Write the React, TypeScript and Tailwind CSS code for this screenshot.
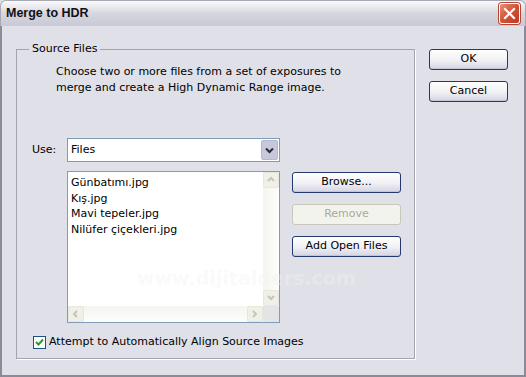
import React from 'react';

const font = { fontFamily: '"DejaVu Sans", Verdana, sans-serif' };
const titleFont = { fontFamily: '"Liberation Sans", Arial, sans-serif' };

const Button = ({ label, disabled = false }: { label: string; disabled?: boolean }) => (
  <div
    className={
      disabled
        ? 'h-[21px] flex items-center justify-center rounded-[3px] border border-[#c9c7ba] bg-[#f3f3ee] text-[#aca899] text-[11px]'
        : 'h-[21px] flex items-center justify-center rounded-[3px] border border-[#243a6e] bg-gradient-to-b from-white via-[#f2f2f6] to-[#d4d5e2] text-black text-[11px] shadow-[inset_0_-1px_0_#c3c4d6]'
    }
  >
    {label}
  </div>
);

const Chevron = ({ dir, color }: { dir: 'up' | 'down' | 'left' | 'right'; color: string }) => {
  const pts = {
    up: '2,6 5,3 8,6',
    down: '2,3 5,6 8,3',
    left: '6,2 3,5 6,8',
    right: '3,2 6,5 3,8',
  }[dir];
  return (
    <svg width="10" height="10" viewBox="0 0 10 10">
      <polyline points={pts} fill="none" stroke={color} strokeWidth="2" />
    </svg>
  );
};

const ScrollBtn = ({ dir }: { dir: 'up' | 'down' | 'left' | 'right' }) => (
  <div className="w-[16px] h-[16px] flex items-center justify-center rounded-[2px] border border-[#e8e7dc] bg-[#f1f0e8]">
    <Chevron dir={dir} color="#c6c5b8" />
  </div>
);

const files = ['Günbatımı.jpg', 'Kış.jpg', 'Mavi tepeler.jpg', 'Nilüfer çiçekleri.jpg'];

export default function App() {
  return (
    <div className="w-[526px] h-[377px] flex flex-col bg-[#e0e0e8] text-black relative" style={font}>
      {/* title bar */}
      <div className="h-[26px] flex items-center justify-between pl-[5px] pr-[5px] rounded-t-[6px] border border-b-0 border-[#a9a9b6] bg-gradient-to-b from-[#fbfbfd] via-[#d6d6e0] to-[#c9c9d5]">
        <span className="text-[12.5px] font-bold text-[#111]" style={titleFont}>Merge to HDR</span>
        <div className="w-[21px] h-[21px] rounded-[3px] border border-white bg-gradient-to-br from-[#e98d76] via-[#d2513a] to-[#b63a26] flex items-center justify-center shadow-[0_0_0_1px_#b5472f]">
          <svg width="13" height="13" viewBox="0 0 13 13">
            <path d="M2 2 L11 11 M11 2 L2 11" stroke="white" strokeWidth="2.2" strokeLinecap="square" />
          </svg>
        </div>
      </div>

      {/* body */}
      <div className="flex-1 flex border-x-2 border-b-2 border-[#8b8b98] pl-[14px] pt-[16px]">
        <fieldset className="w-[399px] h-[317px] border border-[#a4a4ae] shadow-[1px_1px_0_white] px-0">
          <legend className="ml-[12px] px-[3px] text-[11px] leading-[14px]">Source Files</legend>

          <div className="ml-[39px] mt-[8px] text-[11px] leading-[16px]">
            <div>Choose two or more files from a set of exposures to</div>
            <div>merge and create a High Dynamic Range image.</div>
          </div>

          <div className="flex items-center mt-[42px]">
            <span className="ml-[15px] w-[35px] text-[11px]">Use:</span>
            <div className="w-[213px] h-[24px] border border-[#7f9db9] bg-white flex items-center">
              <span className="flex-1 pl-[3px] text-[11px]">Files</span>
              <div className="w-[17px] h-[20px] mr-[1px] rounded-[2px] bg-[#c7c8da] border border-[#b6b8cc] flex items-center justify-center">
                <svg width="9" height="7" viewBox="0 0 9 7">
                  <polyline points="1,1.5 4.5,5 8,1.5" fill="none" stroke="#2b2b33" strokeWidth="2" />
                </svg>
              </div>
            </div>
          </div>

          <div className="flex mt-[9px]">
            <div className="ml-[50px] w-[213px] h-[152px] border border-[#7f9db9] bg-white flex flex-col">
              <div className="flex-1 flex">
                <div className="flex-1 pl-[3px] pt-[3px] text-[11px] leading-[15.6px]">
                  {files.map((f) => (
                    <div key={f}>{f}</div>
                  ))}
                </div>
                <div className="w-[16px] flex flex-col justify-between bg-gradient-to-r from-[#f4f4f0] to-[#fdfdfb]">
                  <ScrollBtn dir="up" />
                  <ScrollBtn dir="down" />
                </div>
              </div>
              <div className="h-[16px] flex">
                <div className="flex-1 flex justify-between bg-gradient-to-b from-[#f4f4f0] to-[#fdfdfb]">
                  <ScrollBtn dir="left" />
                  <ScrollBtn dir="right" />
                </div>
                <div className="w-[16px] bg-[#e4e4e6]" />
              </div>
            </div>
            <div className="ml-[12px] mt-[1px] w-[109px] flex flex-col gap-[11px]">
              <Button label="Browse..." />
              <Button label="Remove" disabled />
              <Button label="Add Open Files" />
            </div>
          </div>

          <div className="flex items-center mt-[11px] ml-[16px]">
            <div className="w-[13px] h-[13px] border border-[#1c5180] bg-white flex items-center justify-center">
              <svg width="9" height="9" viewBox="0 0 9 9">
                <polyline points="1,4 3.5,6.5 8,1.5" fill="none" stroke="#21a121" strokeWidth="2" />
              </svg>
            </div>
            <span className="ml-[3px] text-[11px]">Attempt to Automatically Align Source Images</span>
          </div>
        </fieldset>

        <div className="ml-[14px] mt-[7px] w-[79px] flex flex-col gap-[11px]">
          <Button label="OK" />
          <Button label="Cancel" />
        </div>
      </div>

      {/* watermark */}
      <div className="absolute left-[137px] top-[264px] text-[19px] font-bold text-[#f2f2f5]/35 pointer-events-none select-none">
        www.dijitalders.com
      </div>
    </div>
  );
}
